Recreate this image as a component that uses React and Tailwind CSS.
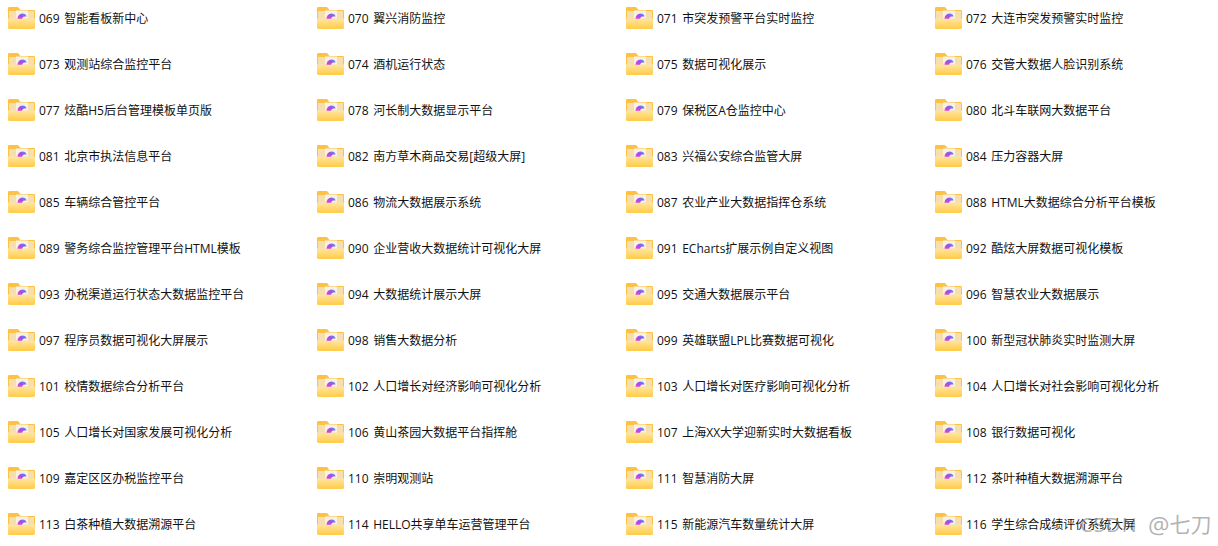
const ITEMS = [
  '069 智能看板新中心', '070 翼兴消防监控', '071 市突发预警平台实时监控', '072 大连市突发预警实时监控',
  '073 观测站综合监控平台', '074 酒机运行状态', '075 数据可视化展示', '076 交管大数据人脸识别系统',
  '077 炫酷H5后台管理模板单页版', '078 河长制大数据显示平台', '079 保税区A仓监控中心', '080 北斗车联网大数据平台',
  '081 北京市执法信息平台', '082 南方草木商品交易[超级大屏]', '083 兴福公安综合监管大屏', '084 压力容器大屏',
  '085 车辆综合管控平台', '086 物流大数据展示系统', '087 农业产业大数据指挥仓系统', '088 HTML大数据综合分析平台模板',
  '089 警务综合监控管理平台HTML模板', '090 企业营收大数据统计可视化大屏', '091 ECharts扩展示例自定义视图', '092 酷炫大屏数据可视化模板',
  '093 办税渠道运行状态大数据监控平台', '094 大数据统计展示大屏', '095 交通大数据展示平台', '096 智慧农业大数据展示',
  '097 程序员数据可视化大屏展示', '098 销售大数据分析', '099 英雄联盟LPL比赛数据可视化', '100 新型冠状肺炎实时监测大屏',
  '101 校情数据综合分析平台', '102 人口增长对经济影响可视化分析', '103 人口增长对医疗影响可视化分析', '104 人口增长对社会影响可视化分析',
  '105 人口增长对国家发展可视化分析', '106 黄山茶园大数据平台指挥舱', '107 上海XX大学迎新实时大数据看板', '108 银行数据可视化',
  '109 嘉定区区办税监控平台', '110 崇明观测站', '111 智慧消防大屏', '112 茶叶种植大数据溯源平台',
  '113 白茶种植大数据溯源平台', '114 HELLO共享单车运营管理平台', '115 新能源汽车数量统计大屏', '116 学生综合成绩评价系统大屏',
]

function FolderIcon() {
  return (
    <svg width="27" height="22" viewBox="0 0 27 22" className="shrink-0">
      <defs>
        <linearGradient id="front" x1="0" y1="0" x2="0" y2="1">
          <stop offset="0" stopColor="#ffe6a0" />
          <stop offset="1" stopColor="#ffcb47" />
        </linearGradient>
        <linearGradient id="blob" x1="0" y1="1" x2="1" y2="0">
          <stop offset="0" stopColor="#f040d0" />
          <stop offset="0.55" stopColor="#9a50f0" />
          <stop offset="1" stopColor="#3ea6f5" />
        </linearGradient>
      </defs>
      <path d="M0 1.2Q0 0 1.2 0H10L12.5 3H25.8Q27 3 27 4.2V13H0Z" fill="#ffc142" />
      <rect x="1" y="4" width="25" height="8" fill="#f5deb0" />
      <rect x="8" y="3.5" width="12" height="8" fill="#f9f1e2" />
      <path d="M9.5 12Q9.5 7 14.5 6.5Q18 6.5 18.5 9.5L16 9.5Q14.5 9.5 14 12Z" fill="url(#blob)" />
      <path d="M0 11.5Q13 12 27 11.5V20.5Q27 22 25.5 22H1.5Q0 22 0 20.5Z" fill="url(#front)" />
    </svg>
  )
}

export default function App() {
  return (
    <div className="relative w-[1218px] h-[546px] overflow-hidden bg-white text-[12px] text-[#111] font-['Open_Sans','Noto_Sans_CJK_SC',sans-serif]">
      <div className="grid grid-cols-[repeat(4,309px)] auto-rows-[22px] gap-y-[24px] pl-[8px] pt-[7px]">
        {ITEMS.map((item) => (
          <div key={item} className="flex items-center gap-[4px]">
            <FolderIcon />
            <span className="whitespace-pre leading-[22px] pt-[2px] [word-spacing:1.5px]">{item}</span>
          </div>
        ))}
      </div>
      <div className="absolute left-[1080px] top-[509px] flex items-center h-[32px] text-[20px] text-[#80808099] whitespace-pre">
        <span className="tracking-[1.2px]">CSDN</span>
        <span className="ml-[10px] text-[24px] leading-[32px]">@</span>
        <span className="text-[21px]">七刀</span>
      </div>
    </div>
  )
}
